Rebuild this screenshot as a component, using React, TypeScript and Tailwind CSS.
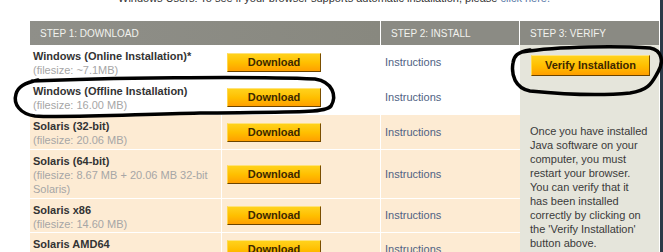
import React from "react";

type Row = { name: string; size: string; h: string; cream: boolean };

const rows: Row[] = [
  { name: "Windows (Online Installation)*", size: "(filesize: ~7.1MB)", h: "h-[35px]", cream: false },
  { name: "Windows (Offline Installation)", size: "(filesize: 16.00 MB)", h: "h-[35px]", cream: false },
  { name: "Solaris (32-bit)", size: "(filesize: 20.06 MB)", h: "h-[35px]", cream: true },
  { name: "Solaris (64-bit)", size: "(filesize: 8.67 MB + 20.06 MB 32-bit Solaris)", h: "h-[49px]", cream: true },
  { name: "Solaris x86", size: "(filesize: 14.60 MB)", h: "h-[34px]", cream: true },
  { name: "Solaris AMD64", size: "(filesize: 7.1 MB)", h: "h-[34px]", cream: true },
];

const verifyLines = [
  "Once you have installed",
  "Java software on your",
  "computer, you must",
  "restart your browser.",
  "You can verify that it",
  "has been installed",
  "correctly by clicking on",
  "the 'Verify Installation'",
  "button above.",
];

function OrangeButton({ label, className }: { label: string; className: string }) {
  return (
    <div
      className={`flex items-center justify-center bg-gradient-to-b from-[#ffd21a] via-[#ffbf00] to-[#ff9f00] border border-t-[#ffe27a] border-l-[#ffd84a] border-r-[#7a4e00] border-b-[#6b4400] text-[11px] font-bold text-[#3d2800] ${className}`}
    >
      {label}
    </div>
  );
}

export default function App() {
  return (
    <div className="relative flex h-[252px] w-[663px] overflow-hidden bg-white font-['Liberation_Sans',Arial,sans-serif]">
      <div className="flex-1">
        {/* line above the table, cut off by the top edge */}
        <div className="h-[21px] overflow-hidden pl-[118px]">
          <p className="-mt-[9px] text-[11px] leading-[14px] text-[#333]">
            Windows Users: To see if your browser supports automatic installation, please{" "}
            <span className="text-[#5a7aa8]">click here.</span>
          </p>
        </div>

        <div className="ml-[30px] w-[629px]">
          {/* header */}
          <div className="flex h-[24px] text-[10px] text-[#f2f2ee]">
            <div className="flex w-[351px] items-center border-r border-white bg-gradient-to-r from-[#8f8f89] to-[#88887f] pl-[10px]">
              STEP 1: DOWNLOAD
            </div>
            <div className="flex w-[139px] items-center border-r border-white bg-[#8b8b84] pl-[10px]">
              STEP 2: INSTALL
            </div>
            <div className="flex w-[139px] items-center bg-[#8a8a83] pl-[10px]">STEP 3: VERIFY</div>
          </div>

          <div className="flex">
            <div className="w-[490px]">
              {rows.map((r) => (
                <div
                  key={r.name}
                  className={`flex ${r.h} border-b border-white ${r.cream ? "bg-[#fdebd3]" : "bg-white"}`}
                >
                  <div className="w-[192px] border-r border-white pl-[3px] pt-[4px] leading-[14px]">
                    <div className="text-[11px] font-bold text-[#333]">{r.name}</div>
                    <div className="text-[11px] text-[#a6a6a6]">{r.size}</div>
                  </div>
                  <div className="flex w-[159px] items-center border-r border-white pl-[5px]">
                    <OrangeButton label="Download" className="h-[19px] w-[94px]" />
                  </div>
                  <div className="flex w-[139px] items-center pl-[4px] text-[11px] text-[#4f6283]">
                    Instructions
                  </div>
                </div>
              ))}
            </div>

            <div className="w-[139px] bg-[#e5e5db] pl-[10px] pt-[10px]">
              <OrangeButton label="Verify Installation" className="ml-[1px] h-[21px] w-[119px]" />
              <p className="mt-[48px] whitespace-nowrap text-[11px] leading-[14px] text-[#3a3a3a]">
                {verifyLines.map((l) => (
                  <span key={l} className="block">
                    {l}
                  </span>
                ))}
              </p>
            </div>
          </div>
        </div>
      </div>

      <div className="ml-[1px] w-[3px] bg-[#2c3a48]" />

      {/* hand-drawn marks over the page */}
      <svg className="pointer-events-none absolute inset-0" width="663" height="252" viewBox="0 0 663 252" fill="none">
        <path
          d="M 32 81 C 100 78, 250 76, 315 79 C 333 82, 337 96, 331 106 C 325 113, 300 112, 200 113 C 120 115, 60 118, 35 116 C 20 114, 13 104, 16 94 C 18 87, 24 83, 38 80"
          stroke="#000"
          strokeWidth="3.5"
          strokeLinecap="round"
        />
        <path
          d="M 522 52 C 560 46, 620 46, 650 48 C 662 50, 664 62, 658 72 C 652 82, 650 90, 630 93 C 600 96, 560 94, 530 91 C 515 88, 511 75, 513 63 C 514 56, 517 52, 530 50"
          stroke="#000"
          strokeWidth="3.5"
          strokeLinecap="round"
        />
      </svg>
    </div>
  );
}
